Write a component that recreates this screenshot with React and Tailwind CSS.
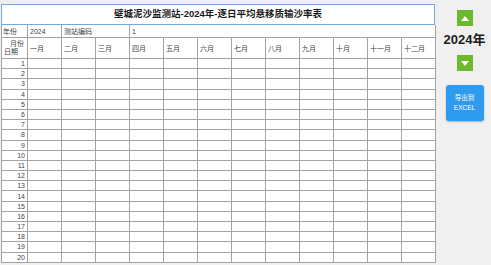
import React from 'react';

const months = ['一月', '二月', '三月', '四月', '五月', '六月', '七月', '八月', '九月', '十月', '十一月', '十二月'];
const days = Array.from({ length: 20 }, (_, i) => i + 1);

const font = "font-['Liberation_Sans','Noto_Sans_CJK_SC',sans-serif]";
const cell = 'border-r border-b border-[#a3a3a3] bg-white';

const Arrow = ({ up }) => (
    <div className="w-[16px] h-[16px] bg-[#6cb92d] flex items-center justify-center">
        <svg width="8" height="5" viewBox="0 0 8 5">
            <path d={up ? 'M0 5L4 0L8 5Z' : 'M0 0L4 5L8 0Z'} fill="#fff" />
        </svg>
    </div>
);

export default function App() {
    return (
        <div className={`w-[491px] h-[265px] bg-[#f0f0f0] flex overflow-hidden ${font}`}>
            {/* report table */}
            <div className="w-[436px] pl-[1px] pt-[4px] flex flex-col">
                <div className="h-[21px] w-[434px] border border-[#74aadb] bg-white flex items-center justify-center text-[9.5px] font-bold text-[#1a1a1a]">
                    壁城泥沙监测站-2024年-逐日平均悬移质输沙率表
                </div>
                <div className="grid grid-cols-[26px_repeat(12,34px)] grid-rows-[13px_21px] auto-rows-[10.2px] text-[7px] text-[#444] leading-none border-l border-[#a3a3a3]">
                    <div className={`${cell} flex items-center pl-[1px]`}>年份</div>
                    <div className={`${cell} flex items-center pl-[2px]`}>2024</div>
                    <div className={`${cell} col-span-2 flex items-center pl-[2px]`}>测站编码</div>
                    <div className={`${cell} col-span-9 flex items-center pl-[2px]`}>1</div>

                    <div className={`${cell} relative`}>
                        <span className="absolute right-[3px] top-[2px]">月份</span>
                        <span className="absolute left-[2px] bottom-[3px]">日期</span>
                    </div>
                    {months.map((m) => (
                        <div key={m} className={`${cell} flex items-center pl-[2px]`}>{m}</div>
                    ))}

                    {days.map((d) => (
                        <React.Fragment key={d}>
                            <div className={`${cell} flex items-center justify-end pr-[2px]`}>{d}</div>
                            {months.map((m) => (
                                <div key={m} className={cell} />
                            ))}
                        </React.Fragment>
                    ))}
                </div>
            </div>

            {/* side controls */}
            <div className="flex-1 flex flex-col items-center pt-[10px] pl-[2px]">
                <Arrow up />
                <div className="mt-[7px] text-[13px] font-bold text-[#1c1c1c] leading-none">2024年</div>
                <div className="mt-[9px]">
                    <Arrow />
                </div>
                <div className="mt-[14px] w-[38px] h-[36px] bg-[#2f9bef] rounded-[3px] shadow-[0_1px_2px_rgba(0,0,0,0.25)] flex flex-col items-center justify-center text-white text-[6.5px] leading-[10px]">
                    <span>导出到</span>
                    <span>EXCEL</span>
                </div>
            </div>
        </div>
    );
}
